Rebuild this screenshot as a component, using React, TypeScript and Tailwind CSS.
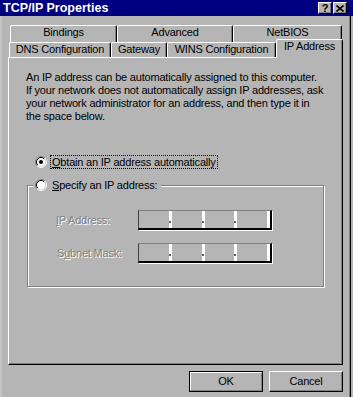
import React from "react";

function Radio({ checked }: { checked?: boolean }) {
  return (
    <svg width="12" height="12" viewBox="0 0 12 12" className="shrink-0">
      <circle cx="6" cy="6" r="4.5" fill="#fff" />
      <path d="M9.89 2.11 A5.5 5.5 0 0 0 2.11 9.89" fill="none" stroke="#808080" strokeWidth="1" />
      <path d="M2.11 9.89 A5.5 5.5 0 0 0 9.89 2.11" fill="none" stroke="#fff" strokeWidth="1" />
      <path d="M9.18 2.82 A4.5 4.5 0 0 0 2.82 9.18" fill="none" stroke="#000" strokeWidth="1" />
      <path d="M2.82 9.18 A4.5 4.5 0 0 0 9.18 2.82" fill="none" stroke="#dfdfdf" strokeWidth="1" />
      {checked && <circle cx="6" cy="6" r="2" fill="#000" />}
    </svg>
  );
}

function IPField() {
  return (
    <div className="flex h-[20px] w-[134px] border-t border-l border-t-[#808080] border-l-[#404040] border-b-2 border-r-2 border-b-black border-r-black shadow-[1px_1px_0_#ffffff]">
      {[0, 1, 2, 3].map((i) => (
        <div key={i} className="flex flex-1">
          <div className="flex-1" />
          <div className="relative w-[3px] bg-white">
            {i < 3 && <span className="absolute left-0 bottom-[5px] h-[2px] w-[2px] bg-[#606060]" />}
          </div>
        </div>
      ))}
    </div>
  );
}

function TitleBtn({ children }: { children: React.ReactNode }) {
  return (
    <div className="flex h-[12px] w-[14px] items-center justify-center border-t border-l border-white border-b border-r border-b-black border-r-black bg-[#b5b5b5] shadow-[inset_-1px_-1px_0_#808080]">
      {children}
    </div>
  );
}

export default function App() {
  return (
    <div className="flex h-[397px] w-[353px] flex-col overflow-hidden bg-[#b5b5b5] font-['Liberation_Sans',Arial,sans-serif] text-[11px] leading-[13px] tracking-[-0.2px] text-black">
      {/* Title bar */}
      <div className="flex h-[16px] shrink-0 items-center bg-[#000080] pl-[3px] pr-[6px]">
        <span className="text-[12.5px] font-bold leading-none tracking-normal text-white">TCP/IP Properties</span>
        <div className="ml-auto flex gap-[1px]">
          <TitleBtn>
            <span className="text-[11px] font-bold leading-none text-black">?</span>
          </TitleBtn>
          <TitleBtn>
            <svg width="8" height="7" viewBox="0 0 8 7">
              <path d="M0.5 0.5 L7.5 6.5 M7.5 0.5 L0.5 6.5" stroke="#000" strokeWidth="1.6" />
            </svg>
          </TitleBtn>
        </div>
      </div>

      {/* Body */}
      <div className="flex w-[351px] flex-1 flex-col border-r border-black pl-[8px] pt-[9px] shadow-[inset_-1px_0_0_#808080,inset_2px_0_0_#c4c4c4]">
        {/* Back tab row */}
        <div className="ml-[2px] flex h-[17px]">
          <div className="h-[17px] w-[107px] rounded-t-[2px] border-t border-l border-white border-r border-r-black text-center shadow-[inset_-1px_0_0_#808080]">Bindings</div>
          <div className="h-[17px] w-[116px] rounded-t-[2px] border-t border-l border-white border-r border-r-black text-center shadow-[inset_-1px_0_0_#808080]">Advanced</div>
          <div className="h-[17px] w-[109px] rounded-t-[2px] border-t border-l border-white border-r border-r-black text-center shadow-[inset_-1px_0_0_#808080]">NetBIOS</div>
        </div>
        {/* Front tab row */}
        <div className="ml-[1px] flex h-[15px] items-end">
          <div className="h-[15px] w-[102px] rounded-t-[2px] border-t border-l border-white border-r border-r-black bg-[#b5b5b5] text-center shadow-[inset_-1px_0_0_#808080]">DNS Configuration</div>
          <div className="h-[15px] w-[56px] rounded-t-[2px] border-t border-l border-white border-r border-r-black bg-[#b5b5b5] text-center shadow-[inset_-1px_0_0_#808080]">Gateway</div>
          <div className="h-[15px] w-[109px] rounded-t-[2px] border-t border-l border-white border-r border-r-black bg-[#b5b5b5] text-center shadow-[inset_-1px_0_0_#808080]">WINS Configuration</div>
          <div className="relative z-10 -mb-[1px] h-[19px] w-[67px] rounded-t-[2px] border-t border-l border-white border-r border-r-black bg-[#b5b5b5] text-center shadow-[inset_-1px_0_0_#808080]">IP Address</div>
        </div>

        {/* Panel */}
        <div className="flex h-[308px] w-[335px] flex-col border-t border-l border-white border-b border-r border-b-black border-r-black pl-[17px] pt-[13px] shadow-[inset_-1px_-1px_0_#808080]">
          <p className="whitespace-nowrap">
            An IP address can be automatically assigned to this computer.
            <br />
            If your network does not automatically assign IP addresses, ask
            <br />
            your network administrator for an address, and then type it in
            <br />
            the space below.
          </p>

          <div className="ml-[9px] mt-[32px] flex h-[14px] items-center">
            <Radio checked />
            <span className="ml-[3px] border border-dotted border-black px-[1px] leading-[12px]">
              <span className="underline">O</span>btain an IP address automatically
            </span>
          </div>

          <fieldset className="ml-[1px] mt-[10px] w-[297px] border border-[#808080] pb-[23px] pt-[19px] shadow-[1px_1px_0_#ffffff,inset_1px_1px_0_#ffffff]">
            <legend className="ml-[5px] flex items-center bg-[#b5b5b5] px-[2px]">
              <Radio />
              <span className="ml-[5px] pr-[2px] leading-[12px]">
                <span className="underline">S</span>pecify an IP address:
              </span>
            </legend>
            <div className="flex items-center pl-[28px]">
              <span className="w-[82px] text-[#808080] [text-shadow:1px_1px_0_#ffffff]">
                <span className="underline">I</span>P Address:
              </span>
              <IPField />
            </div>
            <div className="mt-[13px] flex items-center pl-[29px]">
              <span className="w-[81px] text-[#808080] [text-shadow:1px_1px_0_#ffffff]">
                S<span className="underline">u</span>bnet Mask:
              </span>
              <IPField />
            </div>
          </fieldset>
        </div>

        {/* Buttons */}
        <div className="mt-[6px] flex w-[335px] justify-end gap-[6px]">
          <div className="h-[21px] w-[74px] border border-black">
            <div className="flex h-full w-full items-center justify-center border-t border-l border-white border-b border-r border-b-[#808080] border-r-[#808080]">
              OK
            </div>
          </div>
          <div className="flex h-[21px] w-[74px] items-center justify-center border-t border-l border-white border-b border-r border-b-black border-r-black shadow-[inset_-1px_-1px_0_#808080]">
            Cancel
          </div>
        </div>
      </div>
    </div>
  );
}
